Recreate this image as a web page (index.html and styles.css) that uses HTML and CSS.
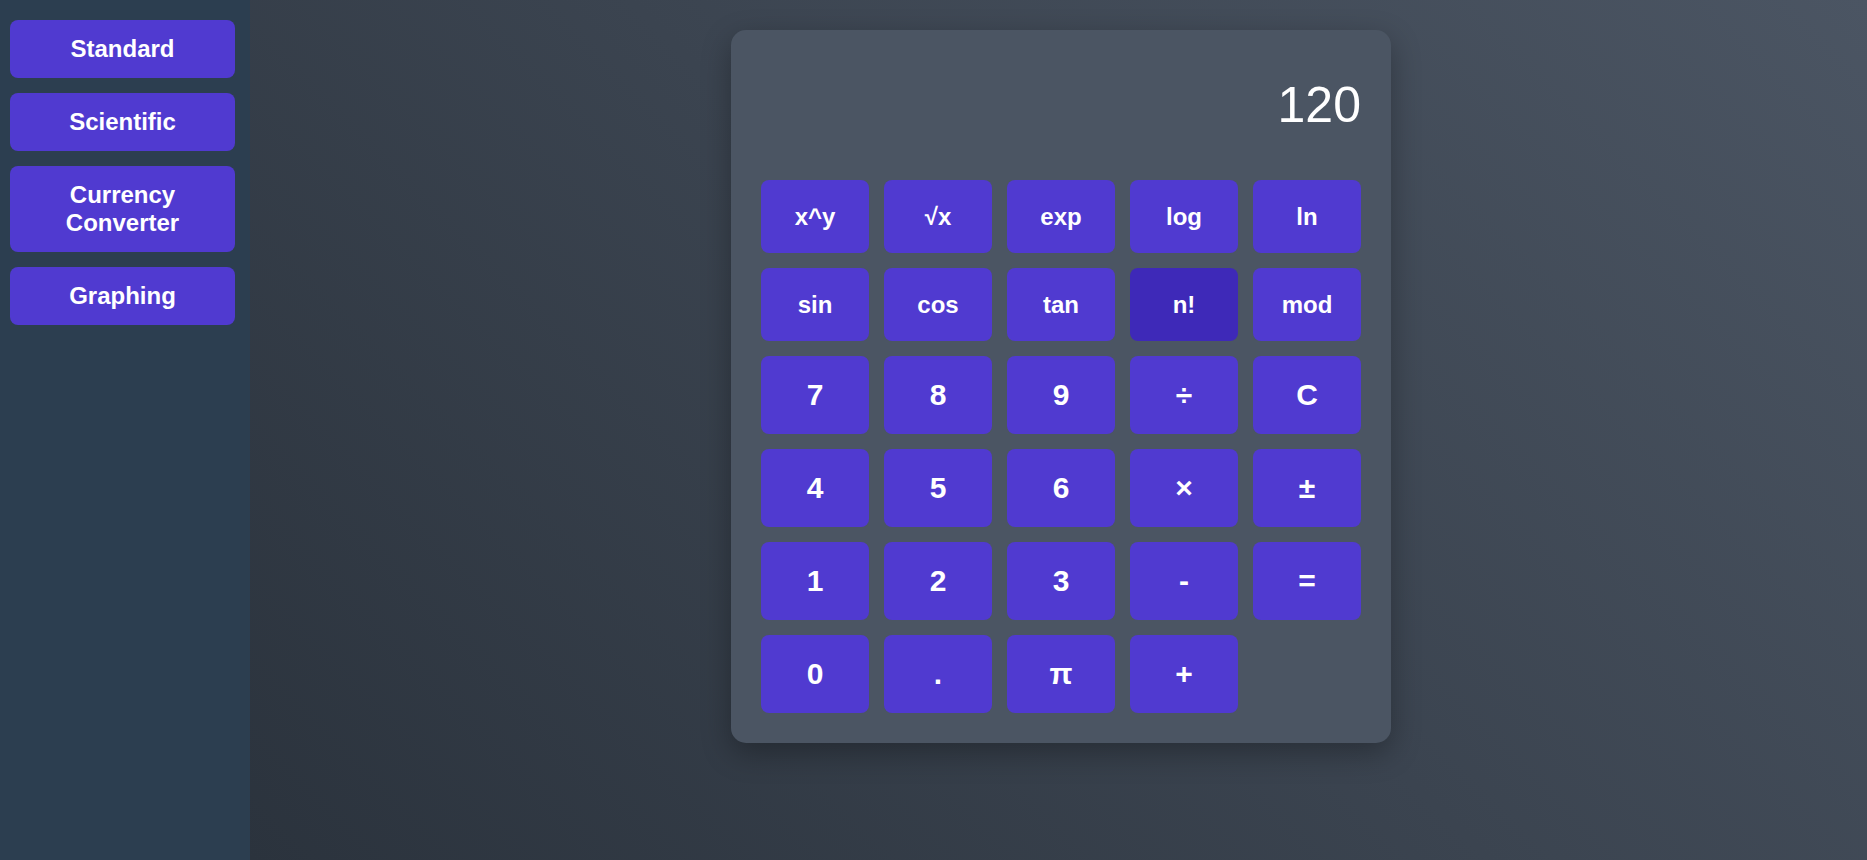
FILE: index.html
```html
<!DOCTYPE html>
<html lang="en">
<head>
<meta charset="utf-8">
<title>Calculator</title>
<link rel="stylesheet" href="styles.css">
</head>
<body>
<div class="app">
  <nav class="sidebar">
    <button class="nav-btn">Standard</button>
    <button class="nav-btn">Scientific</button>
    <button class="nav-btn">Currency Converter</button>
    <button class="nav-btn">Graphing</button>
  </nav>
  <main class="main">
    <section class="calculator">
      <div class="display">120</div>
      <div class="keys">
        <button class="key fn">x^y</button>
        <button class="key fn">√x</button>
        <button class="key fn">exp</button>
        <button class="key fn">log</button>
        <button class="key fn">ln</button>
        <button class="key fn">sin</button>
        <button class="key fn">cos</button>
        <button class="key fn">tan</button>
        <button class="key fn active">n!</button>
        <button class="key fn">mod</button>
        <button class="key">7</button>
        <button class="key">8</button>
        <button class="key">9</button>
        <button class="key">÷</button>
        <button class="key">C</button>
        <button class="key">4</button>
        <button class="key">5</button>
        <button class="key">6</button>
        <button class="key">×</button>
        <button class="key">±</button>
        <button class="key">1</button>
        <button class="key">2</button>
        <button class="key">3</button>
        <button class="key">-</button>
        <button class="key">=</button>
        <button class="key">0</button>
        <button class="key">.</button>
        <button class="key">π</button>
        <button class="key">+</button>
      </div>
    </section>
  </main>
</div>
</body>
</html>
```

FILE: styles.css
```css
* {
  box-sizing: border-box;
}

html, body {
  margin: 0;
  padding: 0;
  height: 100%;
}

body {
  font-family: "Liberation Sans", Arial, sans-serif;
  color: #ffffff;
  overflow: hidden;
}

.app {
  display: flex;
  height: 100vh;
}

.sidebar {
  width: 250px;
  flex: 0 0 250px;
  background: #2c3e50;
  padding: 20px 0 0 10px;
  display: flex;
  flex-direction: column;
  align-items: flex-start;
  gap: 15px;
}

.nav-btn {
  width: 225px;
  padding: 15px 10px;
  border: none;
  border-radius: 8px;
  background: #503ad0;
  color: #ffffff;
  font-family: "Liberation Sans", Arial, sans-serif;
  font-size: 24px;
  font-weight: bold;
  line-height: normal;
  text-align: center;
}

.main {
  flex: 1;
  display: flex;
  justify-content: center;
  align-items: flex-start;
  padding: 30px 0 0 5px;
  background: linear-gradient(45deg, #2b333d 0%, #4b5563 100%);
}

.calculator {
  width: 660px;
  padding: 30px;
  background: #4b5563;
  border-radius: 15px;
  box-shadow: 0 10px 30px rgba(0, 0, 0, 0.3);
}

.display {
  height: 120px;
  padding-top: 16px;
  text-align: right;
  font-size: 50px;
  line-height: normal;
  color: #ffffff;
}

.keys {
  display: grid;
  grid-template-columns: repeat(5, 108px);
  grid-template-rows: 73px 73px 78px 78px 78px 78px;
  gap: 15px;
}

.key {
  border: none;
  border-radius: 8px;
  background: #503ad0;
  color: #ffffff;
  font-family: "Liberation Sans", Arial, sans-serif;
  font-size: 30px;
  font-weight: bold;
  line-height: normal;
  padding: 0;
  display: flex;
  align-items: center;
  justify-content: center;
}

.key.fn {
  font-size: 24px;
}

.key.active {
  background: #3e29b8;
}
```
